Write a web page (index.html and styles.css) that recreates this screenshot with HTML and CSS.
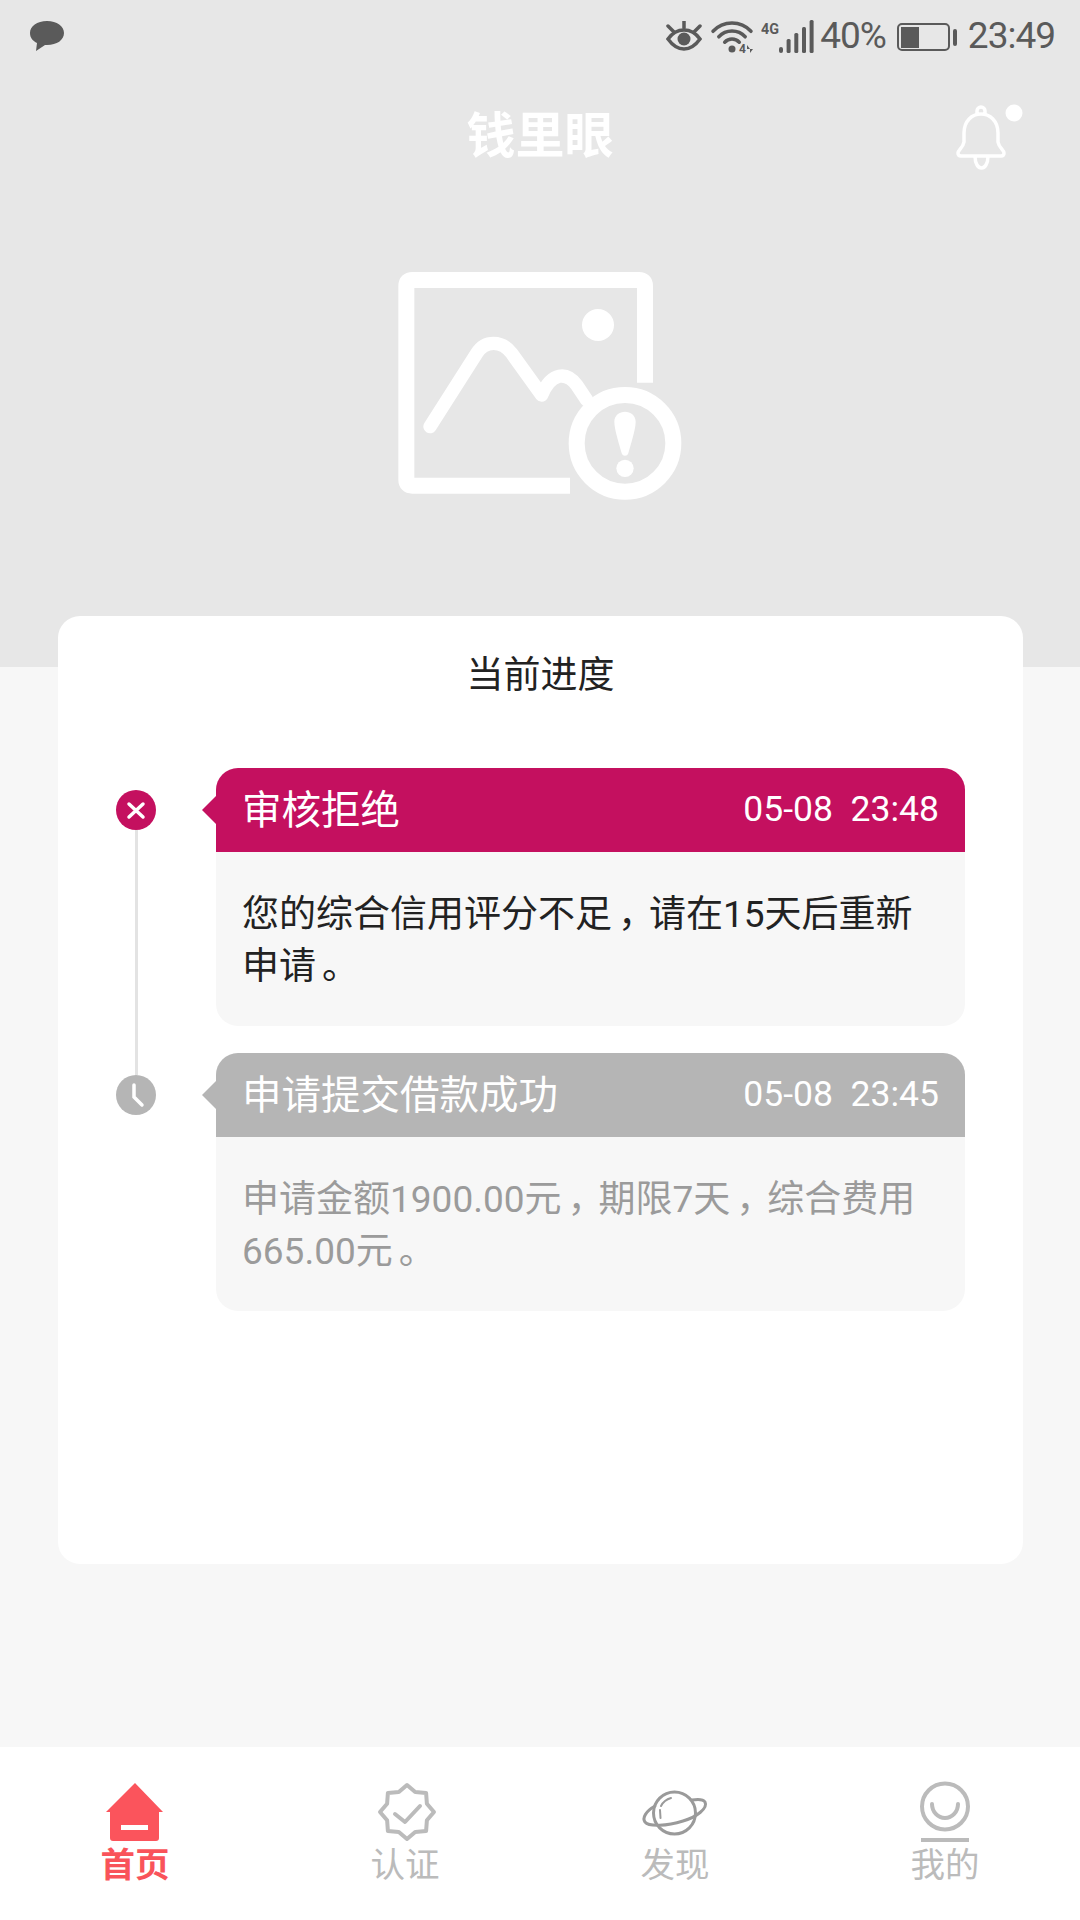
FILE: index.html
```html
<!DOCTYPE html>
<html lang="zh-CN">
<head>
<meta charset="utf-8">
<title>钱里眼</title>
<link rel="stylesheet" href="styles.css">
</head>
<body>
<div class="page">
  <header class="hero">
    <div class="status">
      <svg class="ic-msg" viewBox="0 0 36 34"><path d="M18 2C8 2 1 7 1 14c0 5 3 8 7 10l-1 8 9-6h2c10 0 17-5 17-12S28 2 18 2z"/></svg>
      <div class="status-right">
        <svg class="ic-eye" viewBox="0 0 36 30"><path class="st" d="M2 18C7 11 12 9 18 9s11 2 16 9c-5 7-10 10-16 10S7 25 2 18z"/><circle class="sf" cx="18" cy="18" r="6.5"/><path class="st" d="M18 0v7M2 5l6 6M34 5l-6 6"/></svg>
        <svg class="ic-wifi" viewBox="0 0 40 33"><path class="st" d="M0 11.3a26 26 0 0 1 38 0M5.800 16.800a18 18 0 0 1 26.400 0M11.700 22.200a10 10 0 0 1 14.600 0"/><circle class="sf" cx="19" cy="29" r="3.500"/><text class="ic-mini" x="26" y="33">4</text><path class="sf" d="M34 25l3 4h-3zM37 33l3-4h-3z"/></svg>
        <svg class="ic-sig" viewBox="0 0 55 33"><text class="ic-4g" x="0" y="14" textLength="18" lengthAdjust="spacingAndGlyphs">4G</text><rect class="sf" x="18" y="27" width="4" height="6" rx="2"/><rect class="sf" x="25.600" y="19" width="4" height="14" rx="1.500"/><rect class="sf" x="33.300" y="13" width="4" height="20" rx="1.500"/><rect class="sf" x="41" y="7" width="4" height="26" rx="1.500"/><rect class="sf" x="48.600" y="0" width="4" height="33" rx="1.500"/></svg>
        <span class="st-text st-batt">40%</span>
        <svg class="ic-bat" viewBox="0 0 60 33"><rect class="bt" x="1" y="4" width="51" height="26" rx="4"/><rect class="sf" x="4" y="7" width="18" height="21"/><rect class="sf" x="56" y="9" width="4" height="17" rx="2"/></svg>
        <span class="st-text">23:49</span>
      </div>
    </div>
    <div class="nav">
      <h1 class="nav-title">钱里眼</h1>
      <svg class="ic-bell" viewBox="0 0 80 76"><path class="wt" d="M8 55C8 52 13 50 14 44V35C14 23 22 16 31 16s17 7 17 19V44c1 6 6 8 6 11q0 3-3 3H11q-3 0-3-3zM27 16V13a4 4 0 0 1 8 0v3M25 58c0 16 13 16 13 0"/><circle class="wf" cx="64" cy="15" r="8.500"/></svg>
    </div>
    <svg class="ic-broken" viewBox="0 0 960 810"><path class="bk" d="M795 398V108q0-18-18-18H97q-18 0-18 18V689q0 18 18 18H570"/><path class="bk2" d="M150 530L290 310c25-40 75-40 105 0L485 435c30-70 75-70 105-30L620 450"/><circle class="bk" cx="735" cy="580" r="145"/><circle class="wf" cx="654" cy="225" r="48"/><path class="wf" d="M703 515c0-40 64-40 64 0 0 25-16 70-22 95-3 10-17 10-20 0-6-25-22-70-22-95z"/><circle class="wf" cx="735" cy="655" r="26"/></svg>
  </header>

  <main class="main">
    <section class="card">
      <h2 class="card-title">当前进度</h2>
      <ol class="steps">
        <li class="step step-active">
          <div class="marker">
            <svg class="dot" viewBox="0 0 40 40"><circle class="dot-bg" cx="20" cy="20" r="20"/><path class="dot-ic" d="M13 14l14 13M27 14L13 27"/></svg>
            <div class="line"></div>
          </div>
          <div class="bubble">
            <div class="bubble-head"><span class="head-title">审核拒绝</span><span class="head-time">05-08  23:48</span></div>
            <p class="bubble-body">您的综合信用评分不足<span class="punct">，</span>请在15天后重新<br>申请<span class="punct">。</span></p>
          </div>
        </li>
        <li class="step step-done">
          <div class="marker">
            <svg class="dot" viewBox="0 0 40 40"><circle class="dot-bg" cx="20" cy="20" r="20"/><path class="dot-ic" d="M18 10v12l8 8"/></svg>
          </div>
          <div class="bubble">
            <div class="bubble-head"><span class="head-title">申请提交借款成功</span><span class="head-time">05-08  23:45</span></div>
            <p class="bubble-body">申请金额1900.00元<span class="punct">，</span>期限7天<span class="punct">，</span>综合费用<br>665.00元<span class="punct">。</span></p>
          </div>
        </li>
      </ol>
    </section>
  </main>

  <nav class="tabs">
    <a class="tab tab-on">
      <svg class="tab-ic" viewBox="0 0 64 62"><path class="home" d="M32 3L60 32H56V58q0 3-3 3H10q-3 0-3-3V32H3z"/><rect class="wf" x="18" y="45" width="27" height="5"/></svg>
      <span class="tab-label">首页</span>
    </a>
    <a class="tab">
      <svg class="tab-ic" viewBox="0 0 64 62"><path class="ts" d="M34 5L42.200 12.100 53.100 12.900 53.900 23.800 61 32 53.900 40.200 53.100 51.100 42.200 51.900 34 59 25.800 51.900 14.900 51.100 14.100 40.200 7 32 14.100 23.800 14.900 12.900 25.800 12.100z"/><path class="ts" d="M22 34l10 8 15-16"/></svg>
      <span class="tab-label">认证</span>
    </a>
    <a class="tab">
      <svg class="tab-ic" viewBox="0 0 64 62"><circle class="tp" cx="31.500" cy="33" r="21"/><path class="tp" d="M12 26C3 31-1 38 2 42c4 5 22 4 38-1 14-4 25-13 22-19-2-3-7-3-13-2"/><path class="tp2" d="M18 26q3-6 10-8M17 30l.5 8"/></svg>
      <span class="tab-label">发现</span>
    </a>
    <a class="tab">
      <svg class="tab-ic" viewBox="0 0 64 62"><circle class="ts" cx="32" cy="26.500" r="23"/><path class="ts" d="M19 24a13 14 0 0 0 26 0"/><rect class="tf" x="8" y="58" width="48" height="4"/></svg>
      <span class="tab-label">我的</span>
    </a>
  </nav>
</div>
</body>
</html>
```

FILE: styles.css
```css
* { box-sizing: border-box; }
html, body { margin: 0; padding: 0; }
body { font-family: Roboto, "Noto Sans CJK SC", sans-serif; }
h1, h2, p, ol { margin: 0; padding: 0; font-weight: normal; }
ol { list-style: none; }

.page { width: 1080px; height: 1920px; display: flex; flex-direction: column; background: #f7f7f7; }

.hero { height: 667px; flex: none; background: #e7e7e7; display: flex; flex-direction: column; align-items: center; }

.status { width: 100%; height: 72px; padding: 0 25px 0 29px; display: flex; align-items: center; justify-content: space-between; }
.status-right { display: flex; align-items: center; }
.st-text { font-size: 37px; letter-spacing: -1px; line-height: 72px; color: #5a5a5a; }
.ic-msg { width: 36px; height: 34px; fill: #5a5a5a; }
.ic-eye { width: 36px; height: 30px; margin-right: 11px; }
.ic-wifi { width: 40px; height: 33px; overflow: visible; margin-right: 8px; }
.ic-sig { width: 55px; height: 33px; margin-right: 4px; }
.st-batt { margin-right: 11px; }
.ic-bat { width: 60px; height: 33px; margin-right: 11px; }
.st { fill: none; stroke: #5a5a5a; stroke-width: 3.5; stroke-linecap: round; }
.sf { fill: #5a5a5a; }
.bt { fill: none; stroke: #5a5a5a; stroke-width: 2; }
.ic-mini { font: bold 12px Roboto, sans-serif; fill: #5a5a5a; }
.ic-4g { font: bold 15px Roboto, sans-serif; fill: #5a5a5a; }

.nav { width: 100%; height: 128px; display: grid; grid-template-columns: 1fr auto 1fr; align-items: center; }
.nav-title { grid-column: 2; font-size: 49px; font-weight: bold; color: #fff; line-height: 66px; padding-top: 2px; }
.ic-bell { grid-column: 3; justify-self: end; width: 80px; height: 76px; margin-right: 50px; }
.wt { fill: none; stroke: #fff; stroke-width: 3.5; stroke-linejoin: round; }
.wf { fill: #fff; }

.ic-broken { width: 320px; height: 270px; margin-top: 50px; }
.bk { fill: none; stroke: #fff; stroke-width: 48; }
.bk2 { fill: none; stroke: #fff; stroke-width: 40; stroke-linecap: round; stroke-linejoin: round; }

.main { flex: 1; padding: 0 57px 0 58px; }
.card { height: 948px; margin-top: -51px; position: relative; background: #fff; border-radius: 22px; padding: 30px 58px 0; }
.card-title { font-size: 37px; line-height: 60px; color: #222; text-align: center; }

.steps { margin-top: 62px; }
.step { display: flex; }
.marker { width: 40px; margin-right: 60px; padding-top: 22px; display: flex; flex-direction: column; align-items: center; flex: none; }
.dot { width: 40px; height: 40px; display: block; flex: none; }
.line { width: 3px; flex: 1; margin-bottom: -22px; background: #e3e3e3; }
.dot-ic { fill: none; stroke: #fff; stroke-width: 3.5; stroke-linecap: round; }

.bubble { flex: 1; margin-bottom: 27px; border-radius: 22px; background: #f7f7f7; position: relative; }
.bubble::before { content: ""; position: absolute; left: -14px; top: 28px; border-style: solid; border-width: 14px 14px 14px 0; border-color: transparent; }
.bubble-head { height: 84px; padding: 0 26px 0 26px; border-radius: 22px 22px 0 0; display: flex; align-items: center; justify-content: space-between; color: #fff; }
.head-title { font-size: 39.500px; padding-bottom: 8px; }
.head-time { font-size: 35.500px; white-space: pre; padding-bottom: 2px; }
.bubble-body { padding: 37px 24px 34px 26px; font-size: 37px; line-height: 51.500px; }
.punct { margin-left: 6px; letter-spacing: -6px; }

.step-active .dot-bg { fill: #c4105f; }
.step-active .bubble-head { background: #c4105f; }
.step-active .bubble::before { border-right-color: #c4105f; }
.step-active .bubble-body { color: #222; }
.step-done .dot-bg { fill: #b5b5b5; }
.step-done .bubble-head { background: #b5b5b5; }
.step-done .bubble::before { border-right-color: #b5b5b5; }
.step-done .bubble-body { color: #9b9b9b; }

.tabs { height: 173px; flex: none; background: #fff; display: grid; grid-template-columns: repeat(4, 1fr); padding-top: 33px; }
.tab { display: flex; flex-direction: column; align-items: center; color: #bbb; }
.tab-ic { width: 64px; height: 62px; display: block; overflow: visible; }
.tab-label { font-size: 34.500px; line-height: 44px; padding-top: 1px; }
.tab-on { color: #f9535a; }
.tab-on .tab-label { font-weight: bold; }
.home { fill: #fb545c; }
.ts { fill: none; stroke: #bbb; stroke-width: 4; stroke-linejoin: round; stroke-linecap: round; }
.tf { fill: #bbb; }
.tp { fill: none; stroke: #9a9a9a; stroke-width: 3; stroke-linecap: round; }
.tp2 { fill: none; stroke: #9a9a9a; stroke-width: 2; stroke-linecap: round; }
```
